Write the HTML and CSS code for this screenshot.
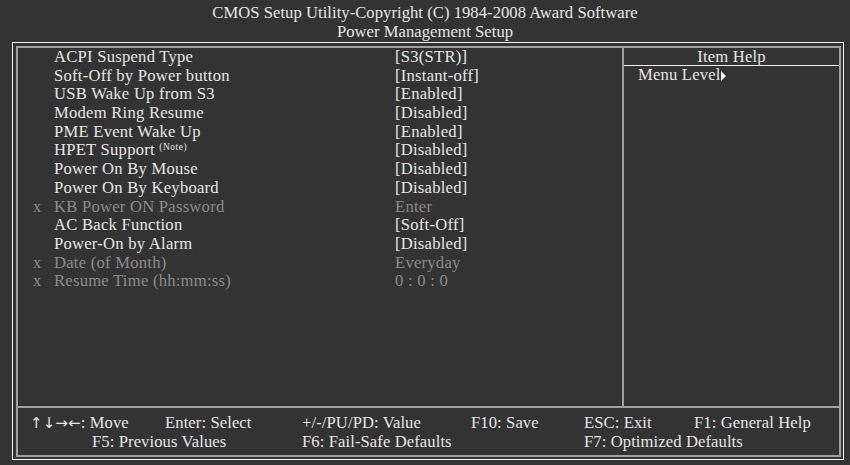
FILE: index.html
```html
<!DOCTYPE html>
<html>
<head>
    <title>Power Management Setup</title>
    <link rel="stylesheet" href="styles.css">
</head>
<body>
    <div class="title">
        <div>CMOS Setup Utility-Copyright (C) 1984-2008 Award Software</div>
        <div>Power Management Setup</div>
    </div>

    <div class="frame">
        <div class="inner">
            <div class="main">
                <div class="items">
                    <div class="row"><span class="mark"></span><span>ACPI Suspend Type</span><span>[S3(STR)]</span></div>
                    <div class="row"><span class="mark"></span><span>Soft-Off by Power button</span><span>[Instant-off]</span></div>
                    <div class="row"><span class="mark"></span><span>USB Wake Up from S3</span><span>[Enabled]</span></div>
                    <div class="row"><span class="mark"></span><span>Modem Ring Resume</span><span>[Disabled]</span></div>
                    <div class="row"><span class="mark"></span><span>PME Event Wake Up</span><span>[Enabled]</span></div>
                    <div class="row"><span class="mark"></span><span>HPET Support <sup class="note">(Note)</sup></span><span>[Disabled]</span></div>
                    <div class="row"><span class="mark"></span><span>Power On By Mouse</span><span>[Disabled]</span></div>
                    <div class="row"><span class="mark"></span><span>Power On By Keyboard</span><span>[Disabled]</span></div>
                    <div class="row off"><span class="mark">x</span><span>KB Power ON Password</span><span>Enter</span></div>
                    <div class="row"><span class="mark"></span><span>AC Back Function</span><span>[Soft-Off]</span></div>
                    <div class="row"><span class="mark"></span><span>Power-On by Alarm</span><span>[Disabled]</span></div>
                    <div class="row off"><span class="mark">x</span><span>Date (of Month)</span><span>Everyday</span></div>
                    <div class="row off"><span class="mark">x</span><span>Resume Time (hh:mm:ss)</span><span>0 : 0 : 0</span></div>
                </div>
                <div class="help">
                    <div class="help-title">Item Help</div>
                    <div class="help-text">Menu Level<span class="tri"></span></div>
                </div>
            </div>
            <div class="keys">
                <span class="k-move"><span class="arrows">&uarr;&darr;&rarr;&larr;</span>: Move</span>
                <span>Enter: Select</span>
                <span>+/-/PU/PD: Value</span>
                <span>F10: Save</span>
                <span>ESC: Exit</span>
                <span>F1: General Help</span>
                <span class="k-f5">F5: Previous Values</span>
                <span class="k-f6">F6: Fail-Safe Defaults</span>
                <span class="k-f7">F7: Optimized Defaults</span>
            </div>
        </div>
    </div>
</body>
</html>
```

FILE: styles.css
```css
body { margin: 0; background: #333333; color: #e6e6e6; font-family: "Liberation Serif", "Times New Roman", serif; font-size: 16.6px; width: 850px; height: 465px; overflow: hidden; }
.title { height: 39px; padding-top: 3px; line-height: 19px; text-align: center; letter-spacing: 0.05px; }
.frame { margin: 0 6px 0 12px; border: 1px solid #f0f0f0; padding: 3px 2px 2px 3px; height: 411px; }
.inner { border: 2px solid #a0a0a0; height: 407px; display: flex; flex-direction: column; }
.main { flex: 1; display: flex; border-bottom: 2px solid #a0a0a0; }
.items { width: 604px; border-right: 2px solid #a0a0a0; letter-spacing: 0.25px; }
.row { display: grid; grid-template-columns: 36px 341px 1fr; line-height: 18.7px; height: 18.7px; white-space: nowrap; }
.mark { padding-left: 15px; }
.row.off { color: #8c8c8c; }
.note { font-size: 9.5px; letter-spacing: 0.5px; vertical-align: 5px; line-height: 0; }
.help { flex: 1; letter-spacing: 0.2px; }
.help-title { text-align: center; height: 17px; line-height: 17px; border-bottom: 1px solid #f0f0f0; }
.help-text { line-height: 18.7px; padding-left: 14px; }
.tri { display: inline-block; width: 0; height: 0; border-left: 5px solid #f0f0f0; border-top: 5.5px solid transparent; border-bottom: 5.5px solid transparent; vertical-align: -1px; }
.keys { height: 47px; padding: 6px 0 0 12px; box-sizing: border-box; display: grid; grid-template-columns: 62px 73px 137px 169px 113px 110px 1fr; grid-auto-rows: 18.7px; line-height: 18.7px; white-space: nowrap; letter-spacing: 0.1px; }
.arrows { font-family: "DejaVu Sans", sans-serif; font-size: 15px; }
.k-move { grid-column: 1 / 3; }
.k-f5 { grid-column: 2 / 4; }
.k-f6 { grid-column: 4 / 6; }
.k-f7 { grid-column: 6 / 8; }
```
